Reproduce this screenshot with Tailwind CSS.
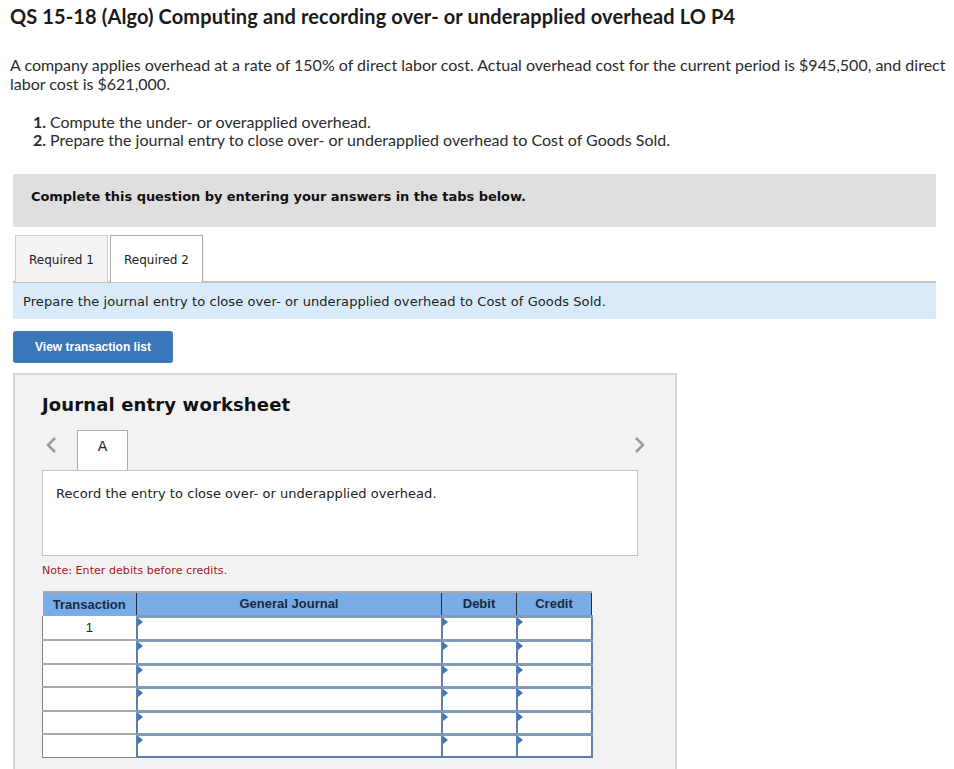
<!DOCTYPE html>
<html lang="en">
<head>
  <meta charset="UTF-8" />
  <title>QS 15-18</title>
  <script src="https://cdn.jsdelivr.net/npm/@tailwindcss/browser@4"></script>
</head>
<body class="bg-white text-black h-[769px] overflow-hidden font-['Lato',sans-serif]">

  <!-- Question text -->
  <div class="pl-[10px]">
    <h1 class="pt-[5px] text-[20px] leading-[22px] font-bold tracking-[0.12px] text-[#1a1a1a]">QS 15-18 (Algo) Computing and recording over- or underapplied overhead LO P4</h1>
    <p class="mt-[28px] text-[16px] leading-[19px] text-[#2b2b2b]">A company applies overhead at a rate of 150% of direct labor cost. Actual overhead cost for the current period is $945,500, and direct labor cost is $621,000.</p>
    <ol class="mt-[20px] pl-[22px] text-[16px] leading-[18px] text-[#2b2b2b]">
      <li><b class="inline-block w-[18px] pr-[4px] text-right">1.</b>Compute the under- or overapplied overhead.</li>
      <li><b class="inline-block w-[18px] pr-[4px] text-right">2.</b>Prepare the journal entry to close over- or underapplied overhead to Cost of Goods Sold.</li>
    </ol>
  </div>

  <div class="ml-[13px] w-[923px]">
    <div class="mt-[25px] h-[53px] pb-[8px] bg-[#dfdfdf] pl-[18px] flex items-center font-['DejaVu_Sans',sans-serif] text-[13px] font-bold tracking-[-0.05px] text-[#111]">Complete this question by entering your answers in the tabs below.</div>

    <!-- Tabs -->
    <div class="mt-[8px] h-[48px] pl-[2px] flex gap-[2px] border-b-2 border-[#c4c4c4] font-['DejaVu_Sans',sans-serif] text-[12px] text-[#222]">
      <div class="w-[93px] h-[47px] pt-[1px] bg-[#f3f3f3] border border-b-0 border-[#cfcfcf] flex items-center justify-center">Required 1</div>
      <div class="w-[93px] h-[47px] pt-[1px] bg-white border border-b-0 border-[#a9a9a9] flex items-center justify-center">Required 2</div>
    </div>
    <div class="h-[36px] pt-[2px] bg-[#d9ebf9] pl-[10px] flex items-center font-['DejaVu_Sans',sans-serif] text-[13px] tracking-[0.08px] text-[#222]">Prepare the journal entry to close over- or underapplied overhead to Cost of Goods Sold.</div>

    <div class="mt-[12px] w-[160px] h-[32px] rounded-[3px] bg-[#3a76ba] text-white flex items-center justify-center font-['Liberation_Sans',sans-serif] text-[12px] font-bold">View transaction list</div>

    <!-- Worksheet -->
    <div class="mt-[10px] w-[664px] h-[420px] bg-[#f2f2f2] border-2 border-[#d6d6d6] border-b-0 pl-[27px]">
      <h2 class="mt-[18px] font-['DejaVu_Sans',sans-serif] text-[18px] leading-[24px] font-bold tracking-[0.14px] text-[#111]">Journal entry worksheet</h2>

      <div class="relative mt-[13px] w-[596px] h-[41px] pl-[35px]">
        <svg class="absolute left-[3px] top-[6px]" width="12" height="18" viewBox="0 0 12 18" fill="none" stroke="#9a9a9a" stroke-width="2.5"><path d="M10 2 L3 9 L10 16" /></svg>
        <svg class="absolute left-[592px] top-[6px]" width="12" height="18" viewBox="0 0 12 18" fill="none" stroke="#9a9a9a" stroke-width="2.5"><path d="M2 2 L9 9 L2 16" /></svg>
        <div class="w-[51px] h-[41px] bg-white border border-b-0 border-[#a9a9a9] pb-[9px] flex items-center justify-center font-['DejaVu_Sans',sans-serif] text-[14px] text-[#222]">A</div>
      </div>
      <div class="relative -mt-px w-[596px] h-[86px] bg-white border border-[#c4c4c4] pl-[13px] pt-[14px] font-['DejaVu_Sans',sans-serif] text-[13px] leading-[18px] tracking-[0.05px] text-[#222]">Record the entry to close over- or underapplied overhead.</div>
      <p class="mt-[8px] font-['DejaVu_Sans',sans-serif] text-[11px] leading-[14px] tracking-[0.06px] text-[#a3161a]">Note: Enter debits before credits.</p>

      <!-- Journal table -->
      <table class="mt-[13px] w-[549px] table-fixed border-collapse font-['Liberation_Sans',sans-serif] text-[13px] text-[#222]">
        <colgroup><col class="w-[94px]" /><col class="w-[305px]" /><col class="w-[75px]" /><col class="w-[75px]" /></colgroup>
        <thead>
          <tr class="h-[24px] bg-[#77ace6] text-[#1a2a44]">
            <th class="font-bold border-t-2 border-[#a9a9a9]">Transaction</th>
            <th class="font-bold border-t-2 border-l border-[#a9a9a9] border-l-[#1c2b3f]">General Journal</th>
            <th class="font-bold border-t-2 border-l border-[#a9a9a9] border-l-[#1c2b3f]">Debit</th>
            <th class="font-bold border-t-2 border-x border-[#a9a9a9] border-x-[#1c2b3f]">Credit</th>
          </tr>
        </thead>
        <tbody class="bg-white">
          <tr class="h-[24px]">
            <td class="text-center border-x border-x-[#808080] border-b-2 border-b-[#a9a9a9]">1</td>
            <td class="relative border-x-2 border-x-[#5f7ea5] border-y-[3px] border-y-[#7f9abb]"><span class="absolute left-0 top-0 border-y-[4px] border-l-[5px] border-y-transparent border-l-[#3a76ba]"></span></td>
            <td class="relative border-x-2 border-x-[#5f7ea5] border-y-[3px] border-y-[#7f9abb]"><span class="absolute left-0 top-0 border-y-[4px] border-l-[5px] border-y-transparent border-l-[#3a76ba]"></span></td>
            <td class="relative border-x-2 border-x-[#5f7ea5] border-y-[3px] border-y-[#7f9abb]"><span class="absolute left-0 top-0 border-y-[4px] border-l-[5px] border-y-transparent border-l-[#3a76ba]"></span></td>
          </tr>
          <tr class="h-[24px]">
            <td class="border-x border-x-[#808080] border-b-2 border-b-[#a9a9a9]"></td>
            <td class="relative border-x-2 border-x-[#5f7ea5] border-y-[3px] border-y-[#7f9abb]"><span class="absolute left-0 top-0 border-y-[4px] border-l-[5px] border-y-transparent border-l-[#3a76ba]"></span></td>
            <td class="relative border-x-2 border-x-[#5f7ea5] border-y-[3px] border-y-[#7f9abb]"><span class="absolute left-0 top-0 border-y-[4px] border-l-[5px] border-y-transparent border-l-[#3a76ba]"></span></td>
            <td class="relative border-x-2 border-x-[#5f7ea5] border-y-[3px] border-y-[#7f9abb]"><span class="absolute left-0 top-0 border-y-[4px] border-l-[5px] border-y-transparent border-l-[#3a76ba]"></span></td>
          </tr>
          <tr class="h-[23px]">
            <td class="border-x border-x-[#808080] border-b-2 border-b-[#a9a9a9]"></td>
            <td class="relative border-x-2 border-x-[#5f7ea5] border-y-[3px] border-y-[#7f9abb]"><span class="absolute left-0 top-0 border-y-[4px] border-l-[5px] border-y-transparent border-l-[#3a76ba]"></span></td>
            <td class="relative border-x-2 border-x-[#5f7ea5] border-y-[3px] border-y-[#7f9abb]"><span class="absolute left-0 top-0 border-y-[4px] border-l-[5px] border-y-transparent border-l-[#3a76ba]"></span></td>
            <td class="relative border-x-2 border-x-[#5f7ea5] border-y-[3px] border-y-[#7f9abb]"><span class="absolute left-0 top-0 border-y-[4px] border-l-[5px] border-y-transparent border-l-[#3a76ba]"></span></td>
          </tr>
          <tr class="h-[24px]">
            <td class="border-x border-x-[#808080] border-b-2 border-b-[#a9a9a9]"></td>
            <td class="relative border-x-2 border-x-[#5f7ea5] border-y-[3px] border-y-[#7f9abb]"><span class="absolute left-0 top-0 border-y-[4px] border-l-[5px] border-y-transparent border-l-[#3a76ba]"></span></td>
            <td class="relative border-x-2 border-x-[#5f7ea5] border-y-[3px] border-y-[#7f9abb]"><span class="absolute left-0 top-0 border-y-[4px] border-l-[5px] border-y-transparent border-l-[#3a76ba]"></span></td>
            <td class="relative border-x-2 border-x-[#5f7ea5] border-y-[3px] border-y-[#7f9abb]"><span class="absolute left-0 top-0 border-y-[4px] border-l-[5px] border-y-transparent border-l-[#3a76ba]"></span></td>
          </tr>
          <tr class="h-[23px]">
            <td class="border-x border-x-[#808080] border-b-2 border-b-[#a9a9a9]"></td>
            <td class="relative border-x-2 border-x-[#5f7ea5] border-y-[3px] border-y-[#7f9abb]"><span class="absolute left-0 top-0 border-y-[4px] border-l-[5px] border-y-transparent border-l-[#3a76ba]"></span></td>
            <td class="relative border-x-2 border-x-[#5f7ea5] border-y-[3px] border-y-[#7f9abb]"><span class="absolute left-0 top-0 border-y-[4px] border-l-[5px] border-y-transparent border-l-[#3a76ba]"></span></td>
            <td class="relative border-x-2 border-x-[#5f7ea5] border-y-[3px] border-y-[#7f9abb]"><span class="absolute left-0 top-0 border-y-[4px] border-l-[5px] border-y-transparent border-l-[#3a76ba]"></span></td>
          </tr>
          <tr class="h-[23px]">
            <td class="border-x border-b border-x-[#808080] border-b-[#808080]"></td>
            <td class="relative border-x-2 border-x-[#5f7ea5] border-t-[3px] border-t-[#7f9abb] border-b-2 border-b-[#5f7ea5]"><span class="absolute left-0 top-0 border-y-[4px] border-l-[5px] border-y-transparent border-l-[#3a76ba]"></span></td>
            <td class="relative border-x-2 border-x-[#5f7ea5] border-t-[3px] border-t-[#7f9abb] border-b-2 border-b-[#5f7ea5]"><span class="absolute left-0 top-0 border-y-[4px] border-l-[5px] border-y-transparent border-l-[#3a76ba]"></span></td>
            <td class="relative border-x-2 border-x-[#5f7ea5] border-t-[3px] border-t-[#7f9abb] border-b-2 border-b-[#5f7ea5]"><span class="absolute left-0 top-0 border-y-[4px] border-l-[5px] border-y-transparent border-l-[#3a76ba]"></span></td>
          </tr>
        </tbody>
      </table>
    </div>
  </div>

</body>
</html>
